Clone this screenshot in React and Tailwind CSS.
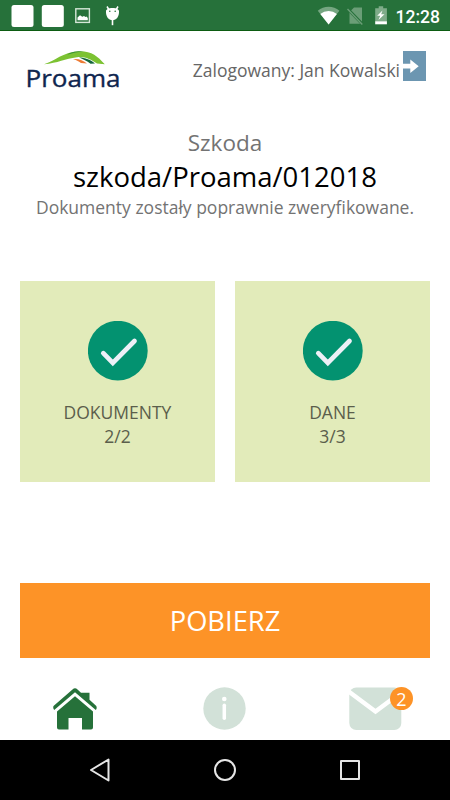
import React from "react";

function StatusBar() {
  return (
    <div className="flex h-[31px] shrink-0 items-start justify-between border-b border-[#0c5c12] bg-[#26713a] pr-[10px]">
      <svg width="130" height="30" viewBox="0 0 130 30">
        <rect x="11.500" y="5" width="22" height="22" rx="2.500" fill="#fff" />
        <rect x="41.800" y="5" width="22" height="22" rx="2.500" fill="#fff" />
        <rect x="75.800" y="8.800" width="13.600" height="13.600" fill="none" stroke="#d5e6d8" strokeWidth="1.400" />
        <path d="M77.500 20.300V17.500l2.500-2.200 2.300 1.500 1.700-.8 1.500 1 1-.5 1.300 1.400v2.400z" fill="#fff" />
        <path d="M106 11c0-1.500 2.500-3 6.500-3s6.500 1.500 6.500 3c.3 5.500-2.500 9.200-6.500 9.200S105.700 16.500 106 11z" fill="#fff" />
        <path d="M108.800 9.500l-1.800-3M116.200 9.500l1.800-3" stroke="#fff" strokeWidth="1.500" />
        <path d="M112.500 19v6.200" stroke="#fff" strokeWidth="1.600" />
        <circle cx="109.800" cy="11.200" r=".8" fill="#26713a" />
        <circle cx="115.200" cy="11.200" r=".8" fill="#26713a" />
      </svg>
      <div className="flex items-start">
        <svg width="76" height="30" viewBox="314 0 76 30">
          <path d="M317.800 10.800a16.500 16.500 0 0 1 21.600 0L328.600 24.500z" fill="#75a681" />
          <path d="M320.300 14a13.200 13.200 0 0 1 16.600 0L328.600 24.500z" fill="#fff" />
          <path d="M354 7.500h8v16.300h-12.500V12z" fill="#6b9e77" />
          <path d="M348.300 9.500l14.500 15" stroke="#26713a" strokeWidth="3" />
          <path d="M347.500 9l14.800 15.500" stroke="#6b9e77" strokeWidth="1.400" />
          <path d="M375.200 8.200h3.500V6.300h4.500v1.900h3.700v13.600h-11.700z" fill="#7fac89" />
          <path d="M375.200 21.300h11.700v3h-11.700z" fill="#fff" />
          <path d="M382.500 10.500l-5.300 5.300h3l-1.700 4.200 6-5.800h-3.300z" fill="#fff" />
        </svg>
        <span className="ml-[5.500px] w-[44.500px] whitespace-nowrap font-['Roboto',sans-serif] text-[17.500px] font-medium leading-[34px] text-white">12:28</span>
      </div>
    </div>
  );
}

function Logo() {
  return (
    <svg width="100" height="48" viewBox="24 46 100 48">
      <path d="M79 57.500C85 57.500 91 60 95 63.500L90.500 63.800C87 61 83 59 79 57.500z" fill="#14663c" />
      <path d="M73 59C79 58.500 83.500 60.500 87 63.500L81 63C78.500 61 76 60 73 59z" fill="#ed7b35" />
      <path d="M44 64.200C55 61 63 52.200 78 51.300C92 50.800 97 56 104.800 64.200L97 63.500C91 59.500 85 56.300 77 57.200C65 58.700 58 63 44 64.200z" fill="#7cc232" />
      <path d="M70 53Q75 50.600 84 51.300Q75 52 67 54.800z" fill="#348e36" />
      <text x="25.500" y="87.300" fontSize="24" textLength="95" lengthAdjust="spacingAndGlyphs" fill="#10264f" stroke="#10264f" strokeWidth=".35" fontFamily="'Open Sans', 'Noto Sans', sans-serif">Proama</text>
    </svg>
  );
}

function Card({ label, count }) {
  return (
    <div className="flex h-[201px] flex-1 flex-col items-center bg-[#e2ebba] pt-10 text-[17.500px] leading-6 text-[#5b5e4c]">
      <svg width="60" height="60" viewBox="0 0 60 60">
        <circle cx="29.800" cy="29.700" r="29.900" fill="#039270" />
        <path d="M15.300 32.200L24.800 41.800L46.500 20" fill="none" stroke="#edf0f7" strokeWidth="4.700" strokeLinecap="round" />
      </svg>
      <div className="mt-[19px]">{label}</div>
      <div>{count}</div>
    </div>
  );
}

function BottomNav() {
  return (
    <div className="flex h-[57px] items-start justify-between pl-[53px] pr-[37px] pt-1">
      <svg width="44" height="43" viewBox="53 687 44 43">
        <path d="M53.500 706L72.500 689.500Q75 687 77.500 689.500L81 692.800H89.500V699.800L96.300 706Q97.300 708.500 95.800 710L75 692.300L54.200 710Q52.700 708.500 53.500 706z" fill="#26713a" />
        <path d="M75 696.300L93 711.500V727.500Q93 729.500 91 729.500H82V718H68.500V729.500H59Q57 729.500 57 727.500V711.500z" fill="#26713a" />
      </svg>
      <svg className="ml-[3px]" width="43" height="43" viewBox="0 0 43 43">
        <circle cx="21.500" cy="21.500" r="21.200" fill="#d2e1d8" />
        <circle cx="21.300" cy="12" r="2.300" fill="#fff" />
        <path d="M21.300 18.300v12.900" stroke="#fff" strokeWidth="3.500" strokeLinecap="round" />
      </svg>
      <div className="relative h-[43px] w-16">
        <svg width="53" height="43" viewBox="0 0 53 43">
          <rect x=".3" y=".500" width="52" height="42.500" rx="7" fill="#d2e1d8" />
          <path d="M-1 4L26.500 24.500L50 7" fill="none" stroke="#fff" strokeWidth="4.500" />
        </svg>
        <div className="absolute left-[41px] top-0 h-[23px] w-[23px] rounded-full bg-[#fd9327] text-center text-[18px] leading-[25px] text-white">2</div>
      </div>
    </div>
  );
}

export default function App() {
  return (
    <div className="flex h-[800px] w-[450px] flex-col overflow-hidden bg-white font-['Open_Sans','Noto_Sans',sans-serif]">
      <StatusBar />
      <header className="flex h-[95px] justify-between pl-6 pr-6 pt-[15px]">
        <Logo />
        <div className="flex">
          <span className="whitespace-nowrap pt-3 text-[17.500px] leading-6 text-[#666]">Zalogowany: Jan Kowalski</span>
          <svg className="ml-[3px] mt-[5px]" width="23" height="30" viewBox="0 0 23 30">
            <path d="M0 0h23v30H0z" fill="#6c96b1" />
            <path d="M0 12.700h7.300V8.500L15.700 15.300L7.300 22V17.500H0z" fill="#fff" />
          </svg>
        </div>
      </header>
      <main className="flex flex-1 flex-col">
        <div className="flex flex-col items-center whitespace-nowrap pt-px text-[#737373]">
          <div className="text-[22.500px] leading-8">Szkoda</div>
          <div className="text-[27.500px] leading-9 text-black">szkoda/Proama/012018</div>
          <div className="text-[17.500px] leading-6">Dokumenty zostały poprawnie zweryfikowane.</div>
        </div>
        <div className="mt-[62px] flex gap-5 px-5">
          <Card label="DOKUMENTY" count="2/2" />
          <Card label="DANE" count="3/3" />
        </div>
        <button className="mx-5 mt-[101px] h-[75px] bg-[#fd9327] pt-px text-[27.300px] text-white">POBIERZ</button>
      </main>
      <BottomNav />
      <footer className="flex h-[60px] items-center justify-between bg-black pl-[89px] pr-[89px]">
        <svg width="22" height="24" viewBox="0 0 22 24" fill="none" stroke="#e6e6e6" strokeWidth="2" strokeLinejoin="round">
          <path d="M19.500 1.500v21L2 12z" />
        </svg>
        <svg width="22" height="22" viewBox="0 0 22 22" fill="none" stroke="#e6e6e6" strokeWidth="2">
          <circle cx="11" cy="11" r="10" />
        </svg>
        <svg width="22" height="22" viewBox="0 0 22 22" fill="none" stroke="#e6e6e6" strokeWidth="2" strokeLinejoin="round">
          <path d="M2 2h18v18H2z" />
        </svg>
      </footer>
    </div>
  );
}
